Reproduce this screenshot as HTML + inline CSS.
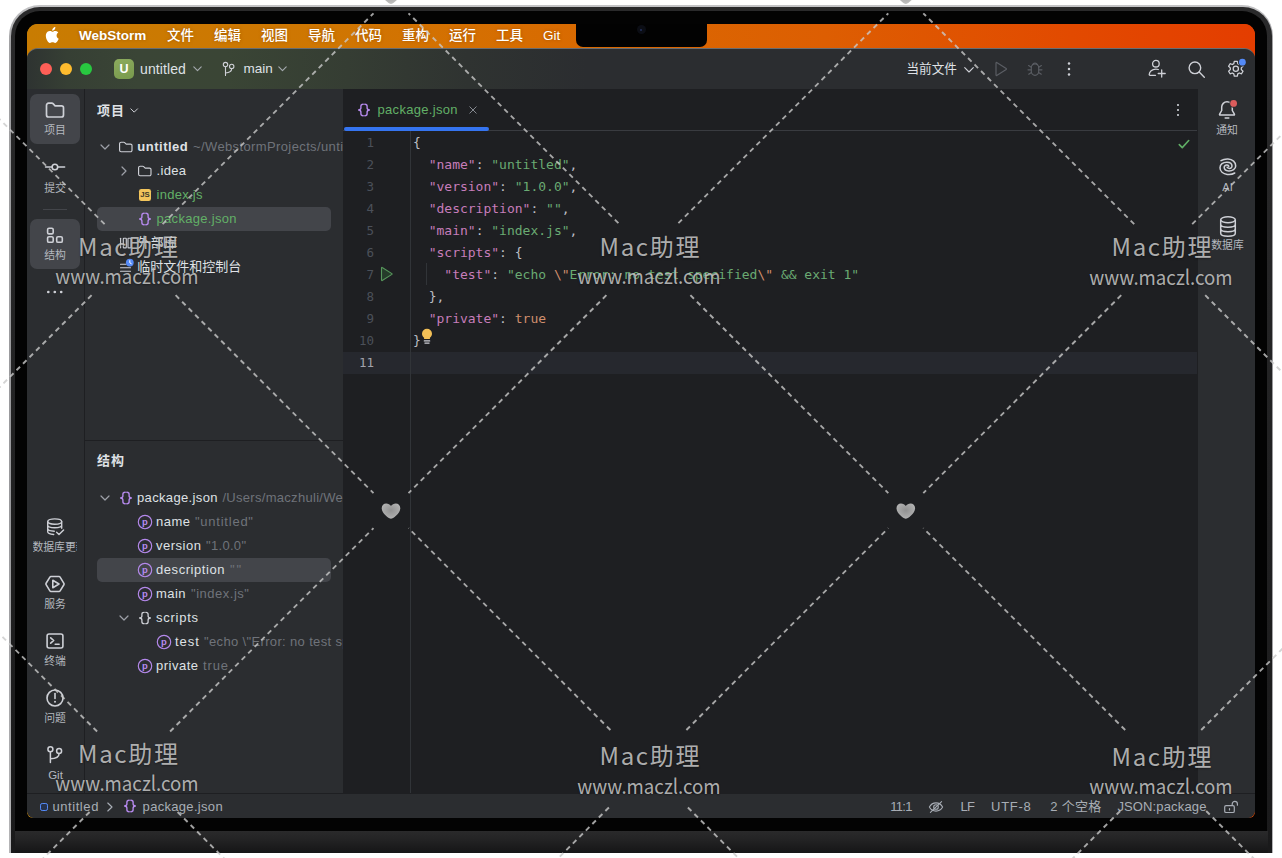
<!DOCTYPE html>
<html lang="zh-CN">
<head>
<meta charset="utf-8">
<title>WebStorm – package.json</title>
<style>
*{box-sizing:border-box;margin:0;padding:0}
html,body{width:1282px;height:858px;overflow:hidden;background:#fff}
body{font-family:"Liberation Sans","Noto Sans CJK SC",sans-serif;font-size:13px;color:#dfe1e5;position:relative}
.abs{position:absolute}
svg{display:block;overflow:visible}
i{font-style:normal}
/* laptop */
#lap-outer{left:9px;top:5px;width:1264px;height:848px;border-radius:31px 31px 0 0;background:linear-gradient(180deg,#c4c4c6 0,#a0a0a2 40px,#98989b 60%,#b4b4b6 100%)}
#lap-mid{left:11px;top:7px;width:1260.500px;height:846px;border-radius:29px 29px 0 0;background:linear-gradient(180deg,#2a2a2b 0,#222223 50%,#1a1a1b 100%)}
#lap-bezel{left:15px;top:11px;width:1252px;height:820px;border-radius:25px 25px 0 0;background:#030303}
#chin{left:15px;top:830.500px;width:1252.700px;height:22.500px;background:linear-gradient(180deg,#2a2a2b 0,#232324 40%,#151516 100%)}
#screen{left:27px;top:24px;width:1228px;height:794px;border-radius:11px 11px 6px 6px;overflow:hidden;background:linear-gradient(90deg,#c98a10 0,#d86a02 50%,#e64a00 100%)}
/* menu bar */
#menubar{left:0;top:0;width:1228px;height:40px;background:linear-gradient(90deg,#c87c02 0,#cf7602 25%,#d96a01 45%,#dd5e02 65%,#e24a00 85%,#e43d00 100%)}
#menubar span{position:absolute;top:0;line-height:23px;color:#fff;font-size:13.5px;font-weight:500;white-space:nowrap;text-shadow:0 0 3px rgba(120,60,0,.55)}
#notch{left:549px;top:0;width:131px;height:23px;background:#020202;border-radius:0 0 7px 7px}
/* ide */
#ide{left:0;top:24px;width:1228px;height:770px;border-radius:11px 11px 7.500px 7.500px;background:#2b2d30;overflow:hidden;border-top:1px solid #686c70}
#titlebar{left:0;top:0;width:1228px;height:40px;background:linear-gradient(90deg,#2e3331 0,#363f34 40px,#3a4536 110px,#3a4535 200px,#353d33 320px,#2f3331 440px,#2b2d30 560px)}
#titlebar span{position:absolute;top:0;line-height:40px;white-space:nowrap;color:#dfe1e5}
.tl{width:12px;height:12px;border-radius:50%;top:14px}
#stripe-l{left:0;top:40px;width:58px;height:704px;background:#2b2d30;border-right:1px solid #1e1f22}
#stripe-r{left:1170px;top:40px;width:58px;height:704px;background:#2b2d30;border-left:1px solid #1e1f22}
#panel{left:58px;top:40px;width:258px;height:704px;background:#2b2d30;overflow:hidden}
#editor{left:316px;top:40px;width:854px;height:704px;background:#1e1f22;overflow:hidden}
#status{left:0;top:744px;width:1228px;height:26px;background:#2b2d30;border-top:1px solid #1e1f22}
.tbtn{position:absolute;width:50px;height:50px;left:3px;border-radius:7px}
.tbtn.on{background:#43454a}
.lbl{position:absolute;width:80px;text-align:center;font-size:10.8px;line-height:14px;height:14px;color:#b4b8bf;white-space:nowrap}
.ico{position:absolute;width:20px;height:20px}
.row{position:absolute;left:12px;width:234px;height:24px;white-space:nowrap}
.row.sel{background:#43454a;border-radius:5px}
.t{position:absolute;top:0;line-height:24px;height:24px;font-size:13px;color:#dfe1e5;white-space:nowrap}
.gray{color:#6f737a}
.grn{color:#62b067}
.ln{position:absolute;left:0;width:31px;text-align:right;color:#4b5059;font-size:12.5px;line-height:22px;height:22px;font-family:"DejaVu Sans Mono","Liberation Mono",monospace}
.cl{position:absolute;left:70px;white-space:pre;font-size:13px;line-height:22px;height:22px;font-family:"DejaVu Sans Mono","Liberation Mono",monospace;color:#bcbec4}
.k{color:#c77dbb}.s{color:#6aab73}.o{color:#cf8e6d}
#status span{position:absolute;top:0;line-height:25px;font-size:13px;color:#a8adb5;white-space:nowrap}
/* watermark */
#wm-layer{left:0;top:0;width:1282px;height:858px;overflow:hidden;pointer-events:none}
.wm{position:absolute;color:rgba(200,200,200,.86);white-space:nowrap;text-align:center;width:300px;text-shadow:0 1px 2px rgba(0,0,0,.35);font-family:"Noto Sans CJK SC","Liberation Sans",sans-serif}
.wm1{font-size:24px;letter-spacing:1.7px;line-height:36px;height:36px;font-weight:400;text-indent:1.7px}
.wm2{font-size:20.400px;line-height:26px;height:26px;transform:scaleX(.915)}

</style>
</head>
<body>
<div id="lap-outer" class="abs"></div>
<div id="lap-mid" class="abs"></div>
<div id="lap-bezel" class="abs"></div>
<div id="chin" class="abs"></div>

<div id="screen" class="abs">
  <div id="menubar" class="abs">
    <svg class="abs" style="left:17.300px;top:1.900px" width="15.200" height="18.400" viewBox="0 0 14 17"><path fill="#fff" d="M11.6 9c0-1.9 1.5-2.8 1.6-2.9-.9-1.3-2.200-1.500-2.700-1.500-1.200-.1-2.200.700-2.800.700-.6 0-1.500-.700-2.400-.600C4 4.700 2.900 5.400 2.300 6.500c-1.300 2.200-.300 5.500.9 7.300.6.900 1.300 1.900 2.300 1.800.9 0 1.300-.600 2.400-.600s1.400.600 2.400.600 1.600-.900 2.200-1.800c.7-1 1-2 1-2.100 0 0-1.900-.700-1.900-2.700zM9.800 3.300c.5-.600.800-1.500.7-2.300-.700 0-1.600.5-2.100 1.100-.500.500-.900 1.400-.800 2.200.8.100 1.700-.400 2.200-1z"/></svg>
    <span style="left:52px;font-weight:700">WebStorm</span>
    <span style="left:140px">文件</span>
    <span style="left:187px">编辑</span>
    <span style="left:234px">视图</span>
    <span style="left:281px">导航</span>
    <span style="left:328px">代码</span>
    <span style="left:375px">重构</span>
    <span style="left:422px">运行</span>
    <span style="left:469px">工具</span>
    <span style="left:516px">Git</span>
    <div id="notch" class="abs"><div class="abs" style="left:60.500px;top:1px;width:9px;height:9px;border-radius:50%;background:#0b0d14"></div><div class="abs" style="left:64px;top:4.500px;width:2px;height:2px;border-radius:50%;background:#23305c"></div></div>
  </div>

  <div id="ide" class="abs">
    <div id="titlebar" class="abs">
      <div class="abs tl" style="left:13px;background:#fe5f57"></div>
      <div class="abs tl" style="left:33px;background:#febc2e"></div>
      <div class="abs tl" style="left:53px;background:#28c840"></div>
      <div class="abs" style="left:87px;top:10px;width:20px;height:20px;border-radius:5px;background:linear-gradient(160deg,#8cab5e,#789a4c);color:#fff;font-weight:700;font-size:12.5px;line-height:20px;text-align:center">U</div>
      <span style="left:113px;font-size:14px;letter-spacing:.1px">untitled</span>
      <svg class="abs" style="left:166px;top:17px" width="9" height="6" viewBox="0 0 9 6"><path d="M.8 .9 4.500 4.600 8.200 .9" fill="none" stroke="#a4a9ae" stroke-width="1.150" stroke-linecap="round" stroke-linejoin="round"/></svg>
      <svg class="abs" style="left:194px;top:10px" width="16" height="20" viewBox="0 0 16 20"><g fill="none" stroke="#ced0d6" stroke-width="1.100" stroke-linecap="round"><circle cx="4.500" cy="5.600" r="2.200"/><circle cx="10.700" cy="7.400" r="2.200"/><path d="M4.500 7.800V16.400M10.700 9.600c0 3-2.800 4.200-6.200 4.400"/></g></svg>
      <span style="left:216.500px;font-size:13.5px">main</span>
      <svg class="abs" style="left:251px;top:17px" width="9" height="6" viewBox="0 0 9 6"><path d="M.8 .9 4.500 4.600 8.200 .9" fill="none" stroke="#a4a9ae" stroke-width="1.150" stroke-linecap="round" stroke-linejoin="round"/></svg>

      <span style="left:879.500px;font-size:12.600px">当前文件</span>
      <svg class="abs" style="left:936.500px;top:17.500px" width="10" height="6" viewBox="0 0 10 6"><path d="M.7 .7 5 5 9.300 .7" fill="none" stroke="#ced0d6" stroke-width="1.100" stroke-linecap="round" stroke-linejoin="round"/></svg>
      <svg class="abs" style="left:964px;top:10px" width="20" height="20" viewBox="0 0 20 20"><path d="M5 3.900v12.200c0 .4.400.6.700.4l9.500-6.100c.3-.2.300-.6 0-.8L5.700 3.500c-.3-.2-.7 0-.7.400z" fill="none" stroke="#5a5d63" stroke-width="1.200" stroke-linejoin="round"/></svg>
      <svg class="abs" style="left:998px;top:9.500px" width="20" height="20" viewBox="0 0 20 20"><g fill="none" stroke="#5a5d63" stroke-width="1.150" stroke-linecap="round"><path d="M6.300 8.600a3.700 3.700 0 0 1 7.400 0v4a3.700 3.700 0 0 1-7.400 0z"/><path d="M7.600 5.800a2.500 2.500 0 0 1 4.800 0M6.300 8.200 3.600 6.600M13.700 8.200l2.700-1.600M6.300 10.800H3M13.700 10.800H17M6.400 13.400l-2.700 1.800M13.600 13.400l2.700 1.800"/></g></svg>
      <svg class="abs" style="left:1040px;top:12px" width="4" height="16" viewBox="0 0 4 16"><g fill="#ced0d6"><circle cx="2" cy="2.500" r="1.250"/><circle cx="2" cy="8" r="1.250"/><circle cx="2" cy="13.500" r="1.250"/></g></svg>

      <svg class="abs" style="left:1119px;top:9px" width="22" height="22" viewBox="0 0 22 22"><g fill="none" stroke="#ced0d6" stroke-width="1.300" stroke-linecap="round"><circle cx="9.900" cy="5.700" r="3.300"/><path d="M12.300 11.500c-.7-.2-1.500-.4-2.400-.4-4 0-6.500 2.700-6.700 5.500 0 .4.300.7.700.7h5.600"/><path d="M15.700 12v7M12.200 15.500h7"/></g></svg>
      <svg class="abs" style="left:1158px;top:9px" width="22" height="22" viewBox="0 0 22 22"><g fill="none" stroke="#ced0d6" stroke-width="1.400" stroke-linecap="round"><circle cx="9.900" cy="9.800" r="5.800"/><path d="M14.200 14.100 19.300 19.200"/></g></svg>
      <svg class="abs" style="left:1198px;top:9px" width="22" height="22" viewBox="0 0 22 22"><g fill="none" stroke="#ced0d6" stroke-width="1.300" stroke-linejoin="round"><path d="M9.300 2.800h3l.5 2.300 1.500.9 2.200-.8 1.500 2.600-1.700 1.600v1.700l1.700 1.600-1.500 2.600-2.200-.8-1.500.9-.5 2.300h-3l-.5-2.300-1.500-.9-2.200.8-1.500-2.600 1.700-1.600V9.400L3.600 7.800l1.500-2.600 2.200.8 1.500-.9z" transform="translate(0 .5)"/><circle cx="10.800" cy="10.800" r="2.600"/></g><circle cx="17.400" cy="4.200" r="4.400" fill="#2b2d30"/><circle cx="17.400" cy="4.200" r="3.400" fill="#548af7"/></svg>
    </div>

    <div id="stripe-l" class="abs">
      <div class="tbtn on" style="top:5px"></div>
      <svg class="ico" style="left:18px;top:10.500px" viewBox="0 0 20 20"><path d="M1.500 5.200a2 2 0 0 1 2-2h3.400a1.600 1.600 0 0 1 1.150.5l2.050 2.100h6.400a2 2 0 0 1 2 2v7.200a2 2 0 0 1-2 2h-13a2 2 0 0 1-2-2z" fill="none" stroke="#ced0d6" stroke-width="1.700" stroke-linejoin="round"/></svg>
      <div class="lbl" style="left:-12px;top:34px">项目</div>

      <svg class="ico" style="left:18px;top:67.500px" viewBox="0 0 20 20"><g fill="none" stroke="#ced0d6" stroke-width="1.600" stroke-linecap="round"><circle cx="9.900" cy="10" r="2.800"/><path d="M.6 10H7M12.800 10h6.800"/></g></svg>
      <div class="lbl" style="left:-12px;top:91.500px">提交</div>

      <div class="abs" style="left:16px;top:120px;width:24px;height:1px;background:#43454a"></div>

      <div class="tbtn on" style="top:130px"></div>
      <svg class="ico" style="left:18px;top:136px" viewBox="0 0 20 20"><g fill="none" stroke="#ced0d6" stroke-width="1.600"><rect x="2.600" y="3.300" width="5.600" height="5.600" rx="1.400"/><rect x="2.600" y="11.700" width="5.600" height="5.600" rx="1.400"/><rect x="11.700" y="11.700" width="5.600" height="5.600" rx="1.400"/></g></svg>
      <div class="lbl" style="left:-12px;top:159px">结构</div>

      <svg class="abs" style="left:19px;top:201px" width="18" height="4" viewBox="0 0 18 4"><g fill="#ced0d6"><circle cx="2.300" cy="2" r="1.350"/><circle cx="8.800" cy="2" r="1.350"/><circle cx="15.200" cy="2" r="1.350"/></g></svg>

      <svg class="ico" style="left:18px;top:427.500px" viewBox="0 0 20 20"><g fill="none" stroke="#ced0d6" stroke-width="1.400" stroke-linecap="round" stroke-linejoin="round"><ellipse cx="9.700" cy="4.600" rx="7" ry="2.700"/><path d="M2.700 4.600v10.200c0 1.400 2.600 2.500 6 2.700M16.700 4.600v6.600M2.700 8c0 1.500 3.100 2.700 7 2.700s7-1.200 7-2.700M2.700 11.500c0 1.400 2.900 2.600 6.600 2.700"/><path d="M11.600 15.200l2.400 2.400 4.600-4.700"/></g></svg>
      <div class="lbl" style="left:5.500px;top:451px;width:44px;text-align:left;overflow:hidden">数据库更新</div>

      <svg class="ico" style="left:18px;top:485px" viewBox="0 0 20 20"><g fill="none" stroke="#ced0d6" stroke-width="1.600" stroke-linejoin="round"><path d="M6 2.500h8a1.300 1.300 0 0 1 1.100.6l3.800 6.200a1.300 1.300 0 0 1 0 1.400l-3.800 6.200a1.300 1.300 0 0 1-1.100.6H6a1.300 1.300 0 0 1-1.100-.6L1.100 10.700a1.300 1.300 0 0 1 0-1.400l3.800-6.200A1.300 1.300 0 0 1 6 2.500z"/><path d="M7.800 6.300v7.400l6.200-3.700z"/></g></svg>
      <div class="lbl" style="left:-12px;top:508px">服务</div>

      <svg class="ico" style="left:18px;top:542px" viewBox="0 0 20 20"><g fill="none" stroke="#ced0d6" stroke-width="1.600" stroke-linecap="round" stroke-linejoin="round"><rect x="2.100" y="3" width="15.800" height="14" rx="2"/><path d="M5.700 6.800 8.700 9.500 5.700 12.200M10.200 13.200h3.900"/></g></svg>
      <div class="lbl" style="left:-12px;top:565px">终端</div>

      <svg class="ico" style="left:17.500px;top:598.500px" viewBox="0 0 20 20"><g fill="none" stroke="#ced0d6" stroke-width="1.600" stroke-linecap="round"><circle cx="10" cy="10" r="8"/><path d="M10 5.500v5"/></g><circle cx="10" cy="13.800" r="1" fill="#ced0d6"/></svg>
      <div class="lbl" style="left:-12px;top:622px">问题</div>

      <svg class="ico" style="left:18px;top:655px" viewBox="0 0 20 20"><g fill="none" stroke="#ced0d6" stroke-width="1.500" stroke-linecap="round"><circle cx="5.400" cy="5.200" r="2.500"/><circle cx="14.100" cy="6.900" r="2.500"/><path d="M5.400 7.700V18.500M14.100 9.400c0 3.900-3.800 5.200-8.700 5.400"/></g></svg>
      <div class="lbl" style="left:-11.500px;top:679px;font-size:11.500px">Git</div>
    </div>
    <div id="panel" class="abs">
      <span class="t" style="letter-spacing:0.98px;left:12px;top:9.500px;font-weight:700;font-size:13px">项目</span>
      <svg class="abs" style="left:44.9px;top:19.2px" width="8.400" height="5" viewBox="0 0 10 6"><path d="M1 1 5 5 9 1" fill="none" stroke="#ced0d6" stroke-width="1.200" stroke-linecap="round" stroke-linejoin="round"/></svg>
      <div class="row" style="top:46px">
        <svg class="abs" style="left:2.8px;top:9.2px" width="10" height="6" viewBox="0 0 10 6"><path d="M1 1 5 5 9 1" fill="none" stroke="#9da0a8" stroke-width="1.200" stroke-linecap="round" stroke-linejoin="round"/></svg>
        <svg class="abs" style="left:21.0px;top:4.0px" width="16" height="16" viewBox="0 0 16 16"><path d="M1.600 4.700a1.500 1.500 0 0 1 1.500-1.500h2.700a1.200 1.200 0 0 1 .85.350l1.550 1.500h4.300a1.500 1.500 0 0 1 1.500 1.500v4.700a1.500 1.500 0 0 1-1.500 1.500h-9.400a1.500 1.500 0 0 1-1.500-1.500z" fill="none" stroke="#ced0d6" stroke-width="1.150" stroke-linejoin="round"/></svg>
        <span class="t " style="letter-spacing:0.51px;left:40.3px;font-weight:700">untitled</span>
        <span class="t gray" style="left:96.0px;letter-spacing:.38px">~/WebstormProjects/untitled</span>
      </div>
      <div class="row" style="top:70px">
        <svg class="abs" style="left:23.8px;top:7.2px" width="6" height="10" viewBox="0 0 6 10"><path d="M1 1 5 5 1 9" fill="none" stroke="#9da0a8" stroke-width="1.200" stroke-linecap="round" stroke-linejoin="round"/></svg>
        <svg class="abs" style="left:39.9px;top:4.0px" width="16" height="16" viewBox="0 0 16 16"><path d="M1.600 4.700a1.500 1.500 0 0 1 1.500-1.500h2.700a1.200 1.200 0 0 1 .85.350l1.550 1.500h4.300a1.500 1.500 0 0 1 1.500 1.500v4.700a1.500 1.500 0 0 1-1.500 1.500h-9.400a1.500 1.500 0 0 1-1.500-1.500z" fill="none" stroke="#ced0d6" stroke-width="1.150" stroke-linejoin="round"/></svg>
        <span class="t " style="letter-spacing:0.32px;left:59.5px;">.idea</span>
      </div>
      <div class="row" style="top:94px">
        <div class="abs" style="left:41.700px;top:6px;width:12.400px;height:12.400px;border-radius:2.300px;background:#f2c55c;color:#3d3a2a;font-weight:700;font-size:7.800px;line-height:12.600px;text-align:center;letter-spacing:-.2px">JS</div>
        <span class="t grn" style="letter-spacing:0.27px;left:59.5px;">index.js</span>
      </div>
      <div class="row sel" style="top:118px">
        <svg class="abs" style="left:41.0px;top:4.0px" width="14" height="16" viewBox="0 0 14 16"><g fill="none" stroke="#b589ec" stroke-width="1.40" stroke-linecap="round" stroke-linejoin="round"><path d="M6.200 2.300C4.500 2.300 3.900 3 3.900 4.300V6C3.900 7.200 3.200 7.800 1.600 8 3.200 8.200 3.900 8.800 3.900 10V11.700C3.900 13 4.500 13.700 6.200 13.700"/><path d="M7.800 2.300C9.500 2.300 10.100 3 10.100 4.300V6C10.100 7.200 10.800 7.800 12.400 8 10.800 8.200 10.100 8.800 10.100 10V11.700C10.100 13 9.500 13.700 7.800 13.700"/></g></svg>
        <span class="t grn" style="letter-spacing:0.31px;left:59.5px;">package.json</span>
      </div>
      <div class="row" style="top:142px">
        <svg class="abs" style="left:21px;top:4px" width="16" height="16" viewBox="0 0 16 16"><g fill="none" stroke="#ced0d6" stroke-width="1.150"><rect x="5.300" y="3.200" width="3" height="9.600" rx=".6"/><rect x="10" y="3.200" width="3" height="9.600" rx=".6"/><path d="M2.600 3.200v9.600" stroke-linecap="round"/></g></svg>
        <span class="t " style="letter-spacing:0.49px;left:40.3px;">外部库</span>
      </div>
      <div class="row" style="top:166px">
        <svg class="abs" style="left:22px;top:3px" width="16" height="16" viewBox="0 0 16 16"><g fill="none" stroke="#ced0d6" stroke-width="1.150" stroke-linecap="round"><path d="M1.500 6.200h5.500M1.500 9.700h10M1.500 13.200h10"/></g><circle cx="10.800" cy="4.600" r="3.900" fill="#548af7"/><path d="M10.800 2.600v2.200l1.500 .9" fill="none" stroke="#fff" stroke-width="1" stroke-linecap="round"/></svg>
        <span class="t " style="letter-spacing:-0.00px;left:40.3px;">临时文件和控制台</span>
      </div>
      <div class="abs" style="left:0;top:351px;width:258px;height:1px;background:#1e1f22"></div>
      <span class="t" style="letter-spacing:0.98px;left:12px;top:360px;font-weight:700;font-size:13px">结构</span>
      <div class="row" style="top:397px">
        <svg class="abs" style="left:2.5px;top:9.2px" width="10" height="6" viewBox="0 0 10 6"><path d="M1 1 5 5 9 1" fill="none" stroke="#9da0a8" stroke-width="1.200" stroke-linecap="round" stroke-linejoin="round"/></svg>
        <svg class="abs" style="left:21.8px;top:4.0px" width="14" height="16" viewBox="0 0 14 16"><g fill="none" stroke="#b589ec" stroke-width="1.40" stroke-linecap="round" stroke-linejoin="round"><path d="M6.200 2.300C4.500 2.300 3.900 3 3.900 4.300V6C3.900 7.200 3.200 7.800 1.600 8 3.200 8.200 3.900 8.800 3.900 10V11.700C3.900 13 4.500 13.700 6.200 13.700"/><path d="M7.800 2.300C9.500 2.300 10.100 3 10.100 4.300V6C10.100 7.200 10.800 7.800 12.400 8 10.800 8.200 10.100 8.800 10.100 10V11.700C10.100 13 9.500 13.700 7.800 13.700"/></g></svg>
        <span class="t " style="letter-spacing:0.35px;left:40.0px;">package.json</span>
        <span class="t gray" style="left:125.4px;letter-spacing:.3px">/Users/maczhuli/WebstormProjects/untitled/package.json</span>
      </div>
      <div class="row" style="top:421px">
        <svg class="abs" style="left:40.0px;top:4.0px" width="16" height="16" viewBox="0 0 16 16"><circle cx="8" cy="8" r="6.700" fill="none" stroke="#b589ec" stroke-width="1.150"/><text x="8" y="11" text-anchor="middle" font-family="Liberation Sans,sans-serif" font-weight="700" font-size="9.500" fill="#b589ec">p</text></svg>
        <span class="t " style="letter-spacing:0.49px;left:59.0px;">name</span>
        <span class="t gray" style="letter-spacing:0.76px;left:98.0px;">"untitled"</span>
      </div>
      <div class="row" style="top:445px">
        <svg class="abs" style="left:40.0px;top:4.0px" width="16" height="16" viewBox="0 0 16 16"><circle cx="8" cy="8" r="6.700" fill="none" stroke="#b589ec" stroke-width="1.150"/><text x="8" y="11" text-anchor="middle" font-family="Liberation Sans,sans-serif" font-weight="700" font-size="9.500" fill="#b589ec">p</text></svg>
        <span class="t " style="letter-spacing:0.51px;left:59.0px;">version</span>
        <span class="t gray" style="letter-spacing:0.31px;left:109.0px;">"1.0.0"</span>
      </div>
      <div class="row sel" style="top:469px">
        <svg class="abs" style="left:40.0px;top:4.0px" width="16" height="16" viewBox="0 0 16 16"><circle cx="8" cy="8" r="6.700" fill="none" stroke="#b589ec" stroke-width="1.150"/><text x="8" y="11" text-anchor="middle" font-family="Liberation Sans,sans-serif" font-weight="700" font-size="9.500" fill="#b589ec">p</text></svg>
        <span class="t " style="letter-spacing:0.56px;left:59.0px;">description</span>
        <span class="t gray" style="letter-spacing:1.77px;left:133.0px;">""</span>
      </div>
      <div class="row" style="top:493px">
        <svg class="abs" style="left:40.0px;top:4.0px" width="16" height="16" viewBox="0 0 16 16"><circle cx="8" cy="8" r="6.700" fill="none" stroke="#b589ec" stroke-width="1.150"/><text x="8" y="11" text-anchor="middle" font-family="Liberation Sans,sans-serif" font-weight="700" font-size="9.500" fill="#b589ec">p</text></svg>
        <span class="t " style="letter-spacing:0.44px;left:59.0px;">main</span>
        <span class="t gray" style="letter-spacing:0.52px;left:94.0px;">"index.js"</span>
      </div>
      <div class="row" style="top:517px">
        <svg class="abs" style="left:22.0px;top:9.2px" width="10" height="6" viewBox="0 0 10 6"><path d="M1 1 5 5 9 1" fill="none" stroke="#9da0a8" stroke-width="1.200" stroke-linecap="round" stroke-linejoin="round"/></svg>
        <svg class="abs" style="left:40.8px;top:4.0px" width="14" height="16" viewBox="0 0 14 16"><g fill="none" stroke="#ced0d6" stroke-width="1.30" stroke-linecap="round" stroke-linejoin="round"><path d="M6.200 2.300C4.500 2.300 3.900 3 3.900 4.300V6C3.900 7.200 3.200 7.800 1.600 8 3.200 8.200 3.900 8.800 3.900 10V11.700C3.900 13 4.500 13.700 6.200 13.700"/><path d="M7.800 2.300C9.500 2.300 10.100 3 10.100 4.300V6C10.100 7.200 10.800 7.800 12.400 8 10.800 8.200 10.100 8.800 10.100 10V11.700C10.100 13 9.500 13.700 7.800 13.700"/></g></svg>
        <span class="t " style="letter-spacing:0.74px;left:59.0px;">scripts</span>
      </div>
      <div class="row" style="top:541px">
        <svg class="abs" style="left:58.6px;top:4.0px" width="16" height="16" viewBox="0 0 16 16"><circle cx="8" cy="8" r="6.700" fill="none" stroke="#b589ec" stroke-width="1.150"/><text x="8" y="11" text-anchor="middle" font-family="Liberation Sans,sans-serif" font-weight="700" font-size="9.500" fill="#b589ec">p</text></svg>
        <span class="t " style="letter-spacing:1.01px;left:78.0px;">test</span>
        <span class="t gray" style="left:107.0px;letter-spacing:.35px">"echo \"Error: no test specified\" &amp;&amp; exit 1"</span>
      </div>
      <div class="row" style="top:565px">
        <svg class="abs" style="left:40.0px;top:4.0px" width="16" height="16" viewBox="0 0 16 16"><circle cx="8" cy="8" r="6.700" fill="none" stroke="#b589ec" stroke-width="1.150"/><text x="8" y="11" text-anchor="middle" font-family="Liberation Sans,sans-serif" font-weight="700" font-size="9.500" fill="#b589ec">p</text></svg>
        <span class="t " style="letter-spacing:0.49px;left:59.0px;">private</span>
        <span class="t gray" style="letter-spacing:0.86px;left:106.0px;">true</span>
      </div>
    </div>
    <div id="editor" class="abs">
      <svg class="abs" style="left:14px;top:13px" width="14" height="16" viewBox="0 0 14 16"><g fill="none" stroke="#b589ec" stroke-width="1.400" stroke-linecap="round" stroke-linejoin="round"><path d="M6.200 2.300C4.500 2.300 3.900 3 3.900 4.300V6C3.900 7.200 3.200 7.800 1.600 8 3.200 8.200 3.900 8.800 3.900 10V11.700C3.900 13 4.500 13.700 6.200 13.700"/><path d="M7.800 2.300C9.500 2.300 10.100 3 10.100 4.300V6C10.100 7.200 10.800 7.800 12.400 8 10.800 8.200 10.100 8.800 10.100 10V11.700C10.100 13 9.500 13.700 7.800 13.700"/></g></svg>
      <span class="t grn" style="letter-spacing:0.31px;left:34.500px;top:9px">package.json</span>
      <svg class="abs" style="left:126px;top:17px" width="8" height="8" viewBox="0 0 8 8"><path d="M.8 .8 7.200 7.200M7.200 .8 .8 7.200" stroke="#868a91" stroke-width="1" stroke-linecap="round"/></svg>
      <div class="abs" style="left:0;top:41px;width:854px;height:1px;background:#393b40"></div>
      <div class="abs" style="left:1px;top:38px;width:145px;height:3.500px;border-radius:2px;background:#3574f0"></div>
      <svg class="abs" style="left:832.700px;top:14px" width="4" height="14" viewBox="0 0 4 14"><g fill="#ced0d6"><circle cx="2" cy="2" r="1.100"/><circle cx="2" cy="7" r="1.100"/><circle cx="2" cy="12" r="1.100"/></g></svg>
      <div class="abs" style="left:0;top:262.500px;width:854px;height:22px;background:#26282e"></div>
      <div class="abs" style="left:67px;top:42px;width:1px;height:662px;background:#313438"></div>
      <div class="abs" style="left:83.200px;top:174px;width:1px;height:22px;background:#313438"></div>
      <div class="ln" style="top:43px">1</div>
      <div class="cl" style="top:43px">{</div>
      <div class="ln" style="top:65px">2</div>
      <div class="cl" style="top:65px">  <i class="k">"name"</i>: <i class="s">"untitled"</i>,</div>
      <div class="ln" style="top:87px">3</div>
      <div class="cl" style="top:87px">  <i class="k">"version"</i>: <i class="s">"1.0.0"</i>,</div>
      <div class="ln" style="top:109px">4</div>
      <div class="cl" style="top:109px">  <i class="k">"description"</i>: <i class="s">""</i>,</div>
      <div class="ln" style="top:131px">5</div>
      <div class="cl" style="top:131px">  <i class="k">"main"</i>: <i class="s">"index.js"</i>,</div>
      <div class="ln" style="top:153px">6</div>
      <div class="cl" style="top:153px">  <i class="k">"scripts"</i>: {</div>
      <div class="ln" style="top:175px">7</div>
      <div class="cl" style="top:175px">    <i class="k">"test"</i>: <i class="s">"echo </i><i class="o">\"</i><i class="s">Error: no test specified</i><i class="o">\"</i><i class="s"> &amp;&amp; exit 1"</i></div>
      <div class="ln" style="top:197px">8</div>
      <div class="cl" style="top:197px">  },</div>
      <div class="ln" style="top:219px">9</div>
      <div class="cl" style="top:219px">  <i class="k">"private"</i>: <i class="o">true</i></div>
      <div class="ln" style="top:241px">10</div>
      <div class="cl" style="top:241px">}</div>
      <div class="ln" style="top:263px;color:#a1a3ab">11</div>
      <svg class="abs" style="left:37px;top:177px" width="14" height="16" viewBox="0 0 14 16"><path d="M1.500 1.900v12.200c0 .4.400.6.700.4l9.700-6.100c.3-.2.300-.6 0-.8L2.200 1.500c-.3-.2-.7 0-.7.400z" fill="#253c2a" stroke="#57965c" stroke-width="1.100" stroke-linejoin="round"/></svg>
      <svg class="abs" style="left:78px;top:239px" width="12" height="17" viewBox="0 0 12 17"><path d="M6 .8a5 5 0 0 1 5 5c0 1.800-.9 3-2.100 4v1.300H3.100V9.800C1.900 8.800 1 7.600 1 5.800a5 5 0 0 1 5-5z" fill="#f2bf56"/><path d="M3.300 12.900h5.400M3.900 15.100h4.200" stroke="#ced0d6" stroke-width="1.200" stroke-linecap="round"/></svg>
      <svg class="abs" style="left:835px;top:50px" width="12" height="10.300" viewBox="0 0 14 12"><path d="M1.500 6.500 5 10 12.500 1.800" fill="none" stroke="#5fad65" stroke-width="1.900" stroke-linecap="round" stroke-linejoin="round"/></svg>
    </div>
    <div id="stripe-r" class="abs">
      <svg class="ico" style="left:19px;top:10.500px" viewBox="0 0 20 20"><g fill="none" stroke="#ced0d6" stroke-width="1.500" stroke-linecap="round" stroke-linejoin="round"><path d="M10 1.800a5.300 5.300 0 0 0-5.300 5.300v3.400L2.600 14.200c-.2.400 0 .9.500.9h13.800c.5 0 .7-.5.500-.9l-2.100-3.700V7.100A5.300 5.300 0 0 0 10 1.800z"/><path d="M8.200 17.900h3.600"/></g><circle cx="16.600" cy="3.400" r="4.300" fill="#2b2d30"/><circle cx="16.600" cy="3.400" r="3.400" fill="#db5c5c"/></svg>
      <div class="lbl" style="left:-11px;top:34px">通知</div>
      <svg class="ico" style="left:20px;top:68px" viewBox="0 0 20 20"><g fill="none" stroke="#ced0d6" stroke-width="1.550" stroke-linecap="round"><path d="M3 3.600C5 2.400 7.500 1.900 10 2C14.500 2.200 17.800 5 17.700 9C17.600 12 14.500 14.200 10.700 14C8 13.800 6.200 12.200 6.200 10.300C6.200 8.800 7.600 7.900 9 8.100C10 8.250 10.600 8.700 10.800 9.300"/><path d="M16.700 16C14.800 17.200 12 17.700 9.300 17.400C5 16.900 2 14.200 2 10.700C2 7.300 5 5.100 9 5.200C12 5.300 14 6.900 14 9C14 10.600 12.700 11.500 11.300 11.400C10.200 11.300 9.400 10.800 9.100 10.200"/></g></svg>
      <div class="lbl" style="left:-10.500px;top:90.500px;font-size:11px">AI</div>
      <svg class="ico" style="left:20px;top:127px" viewBox="0 0 20 20"><g fill="none" stroke="#ced0d6" stroke-width="1.500"><ellipse cx="10" cy="3.800" rx="7.300" ry="3"/><path d="M2.700 3.800v13.400c0 1.700 3.300 3 7.300 3s7.300-1.300 7.300-3V3.800M2.700 8.300c0 1.700 3.300 3 7.300 3s7.300-1.300 7.300-3M2.700 12.800c0 1.700 3.300 3 7.300 3s7.300-1.300 7.300-3"/></g></svg>
      <div class="lbl" style="left:-10.500px;top:148.500px">数据库</div>
    </div>
    <div id="status" class="abs">
      <div class="abs" style="left:12.800px;top:8.500px;width:8.400px;height:8.400px;border:1.300px solid #548af7;border-radius:2.200px;background:#25324d"></div>
      <span style="letter-spacing:0.58px;left:25.400px">untitled</span>
      <svg class="abs" style="left:80px;top:7.500px" width="6" height="10" viewBox="0 0 6 10"><path d="M.8 1 5 5 .8 9" fill="none" stroke="#a8adb5" stroke-width="1.150" stroke-linecap="round" stroke-linejoin="round"/></svg>
      <svg class="abs" style="left:95.700px;top:4.300px" width="14" height="16" viewBox="0 0 14 16"><g fill="none" stroke="#b589ec" stroke-width="1.400" stroke-linecap="round" stroke-linejoin="round"><path d="M6.200 2.300C4.500 2.300 3.900 3 3.900 4.300V6C3.900 7.200 3.200 7.800 1.600 8 3.200 8.200 3.900 8.800 3.900 10V11.700C3.900 13 4.500 13.700 6.200 13.700"/><path d="M7.800 2.300C9.500 2.300 10.100 3 10.100 4.300V6C10.100 7.200 10.800 7.800 12.400 8 10.800 8.200 10.100 8.800 10.100 10V11.700C10.100 13 9.500 13.700 7.800 13.700"/></g></svg>
      <span style="letter-spacing:0.31px;left:115.600px">package.json</span>
      <span style="letter-spacing:-0.71px;left:863.300px">11:1</span>
      <svg class="abs" style="left:901px;top:4.500px" width="16" height="16" viewBox="0 0 16 16"><g fill="none" stroke="#a8adb5" stroke-width="1.100" stroke-linecap="round"><path d="M1.400 8c1.400-2.600 3.800-4.100 6.600-4.100s5.200 1.500 6.600 4.100c-1.400 2.600-3.800 4.100-6.600 4.100S2.800 10.600 1.400 8z"/><circle cx="8" cy="8" r="2.300"/><path d="M2.400 13.400 13.600 2.600"/></g></svg>
      <span style="letter-spacing:-0.67px;left:933.500px">LF</span>
      <span style="letter-spacing:0.74px;left:964px">UTF-8</span>
      <span style="letter-spacing:0.29px;left:1023.300px">2 个空格</span>
      <span style="letter-spacing:0.14px;left:1090.400px">JSON:package</span>
      <svg class="abs" style="left:1196px;top:4.500px" width="16" height="16" viewBox="0 0 16 16"><g fill="none" stroke="#a8adb5" stroke-width="1.200" stroke-linecap="round"><rect x="1.700" y="6.700" width="9.600" height="6.800" rx="1.300"/><path d="M9.200 6.500V5a2.600 2.600 0 0 1 5.200 0v1.200M6.500 9.500v1.500"/></g></svg>
    </div>
  </div>
</div>
<div id="wm-layer" class="abs">
<svg class="abs" style="left:0;top:0" width="1282" height="858" viewBox="0 0 1282 858">
<g stroke="#c9c9c9" stroke-opacity=".8" stroke-width="1.9" stroke-dasharray="5 4.2" fill="none">
<line x1="104.6" y1="224.2" x2="-106.3" y2="13.3"/>
<line x1="162.6" y1="224.2" x2="373.5" y2="13.3"/>
<line x1="91.6" y1="295.2" x2="-106.3" y2="493.1"/>
<line x1="175.6" y1="295.2" x2="373.5" y2="493.1"/>
<line x1="97.1" y1="731.5" x2="-106.3" y2="528.1"/>
<line x1="170.1" y1="731.5" x2="373.5" y2="528.1"/>
<line x1="89.6" y1="812.0" x2="-106.3" y2="1007.9"/>
<line x1="177.6" y1="812.0" x2="373.5" y2="1007.9"/>
<line x1="618.4" y1="223.2" x2="408.5" y2="13.3"/>
<line x1="678.4" y1="223.2" x2="888.3" y2="13.3"/>
<line x1="606.4" y1="295.2" x2="408.5" y2="493.1"/>
<line x1="690.4" y1="295.2" x2="888.3" y2="493.1"/>
<line x1="610.4" y1="730.0" x2="408.5" y2="528.1"/>
<line x1="686.4" y1="730.0" x2="888.3" y2="528.1"/>
<line x1="608.9" y1="807.5" x2="408.5" y2="1007.9"/>
<line x1="687.9" y1="807.5" x2="888.3" y2="1007.9"/>
<line x1="1134.2" y1="224.2" x2="923.3" y2="13.3"/>
<line x1="1192.2" y1="224.2" x2="1403.1" y2="13.3"/>
<line x1="1121.2" y1="295.2" x2="923.3" y2="493.1"/>
<line x1="1205.2" y1="295.2" x2="1403.1" y2="493.1"/>
<line x1="1125.2" y1="730.0" x2="923.3" y2="528.1"/>
<line x1="1201.2" y1="730.0" x2="1403.1" y2="528.1"/>
<line x1="1120.2" y1="811.0" x2="923.3" y2="1007.9"/>
<line x1="1206.2" y1="811.0" x2="1403.1" y2="1007.9"/>
</g>
<defs><radialGradient id="hg" cx="50%" cy="45%" r="60%"><stop offset="0" stop-color="#9a9a9a"/><stop offset=".7" stop-color="#b4b4b4"/><stop offset="1" stop-color="#c4c4c4"/></radialGradient></defs>
<path transform="translate(391.0 -3.6)" d="M0 7.6 C-1.600 7.600-9.300 2.300-9.300-3 C-9.300-6-7.200-7.800-4.800-7.800 C-2.800-7.800-1-6.800 0-5.200 C1-6.800 2.800-7.800 4.800-7.800 C7.200-7.800 9.300-6 9.300-3 C9.300 2.300 1.600 7.600 0 7.600Z" fill="url(#hg)" fill-opacity=".93"/>
<path transform="translate(391.0 511.2)" d="M0 7.6 C-1.600 7.600-9.300 2.300-9.300-3 C-9.300-6-7.200-7.800-4.800-7.800 C-2.800-7.800-1-6.800 0-5.200 C1-6.800 2.800-7.800 4.800-7.800 C7.200-7.800 9.300-6 9.300-3 C9.300 2.300 1.600 7.600 0 7.600Z" fill="url(#hg)" fill-opacity=".93"/>
<path transform="translate(905.8 -3.6)" d="M0 7.6 C-1.600 7.600-9.300 2.300-9.300-3 C-9.300-6-7.200-7.800-4.800-7.800 C-2.800-7.800-1-6.800 0-5.200 C1-6.800 2.800-7.800 4.800-7.800 C7.200-7.800 9.300-6 9.300-3 C9.300 2.300 1.600 7.600 0 7.600Z" fill="url(#hg)" fill-opacity=".93"/>
<path transform="translate(905.8 511.2)" d="M0 7.6 C-1.600 7.600-9.300 2.300-9.300-3 C-9.300-6-7.200-7.800-4.800-7.800 C-2.800-7.800-1-6.800 0-5.200 C1-6.800 2.800-7.800 4.800-7.800 C7.200-7.800 9.300-6 9.300-3 C9.300 2.300 1.600 7.600 0 7.600Z" fill="url(#hg)" fill-opacity=".93"/>
</svg>
<div class="wm wm1" style="left:-22.0px;top:227.5px">Mac助理</div>
<div class="wm wm2" style="left:-22.7px;top:262.3px">www.maczl.com</div>
<div class="wm wm1" style="left:499.5px;top:227.5px">Mac助理</div>
<div class="wm wm2" style="left:498.8px;top:262.3px">www.maczl.com</div>
<div class="wm wm1" style="left:1011.5px;top:228.0px">Mac助理</div>
<div class="wm wm2" style="left:1010.8px;top:262.8px">www.maczl.com</div>
<div class="wm wm1" style="left:-22.0px;top:734.5px">Mac助理</div>
<div class="wm wm2" style="left:-22.7px;top:769.3px">www.maczl.com</div>
<div class="wm wm1" style="left:499.5px;top:737.0px">Mac助理</div>
<div class="wm wm2" style="left:498.8px;top:771.8px">www.maczl.com</div>
<div class="wm wm1" style="left:1011.5px;top:737.5px">Mac助理</div>
<div class="wm wm2" style="left:1010.8px;top:772.3px">www.maczl.com</div>
</div>
</body>
</html>
